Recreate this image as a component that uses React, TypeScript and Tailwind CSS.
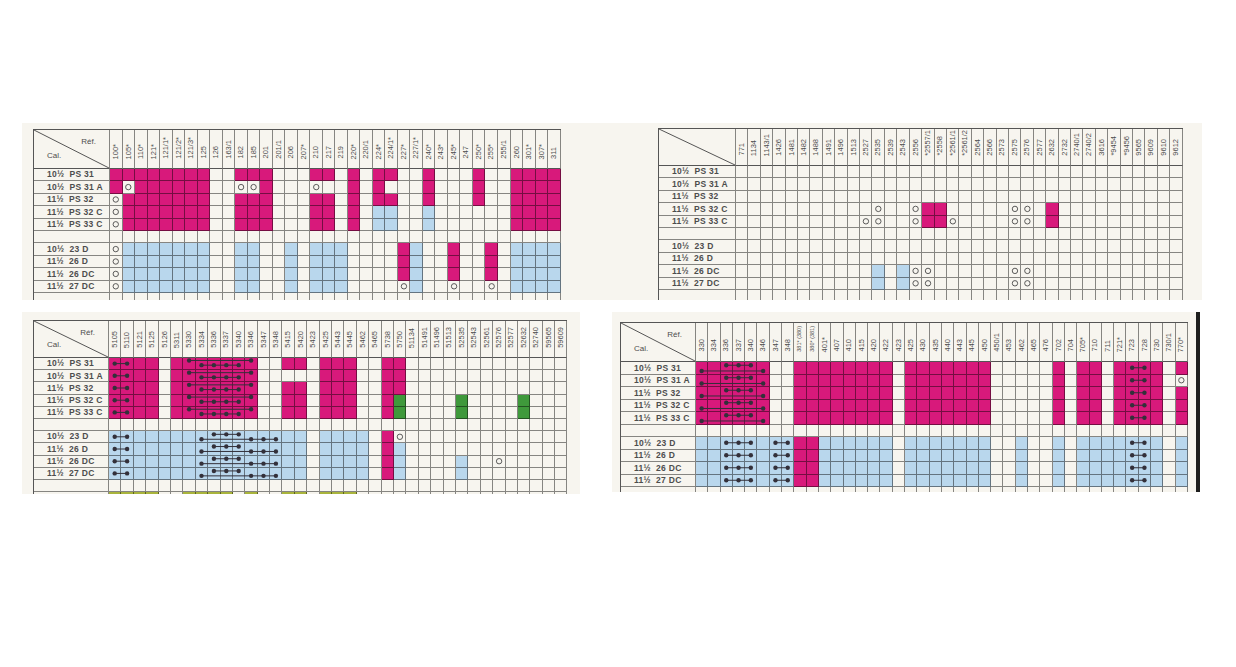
import React from 'react';

type Fill = [number, number, number, number, 'M' | 'B' | 'G' | 'O'];
type Chain = { rows: number[]; cols: number[]; y: number };

type Chart = {
  cols: string[];
  grid: string;
  labelW: number;
  headH: number;
  colW: number;
  rowH: number;
  corner: boolean;
  fills: Fill[];
  circles: [number, number][];
  chains: Chain[];
};

const FILL_CLS = {
  M: 'bg-[#d8197b]',
  B: 'bg-[#b9d7ed]',
  G: 'bg-[#3f993b]',
  O: 'bg-[#a9b43c]',
};

const LABELS: [string, string][] = [
  ['10½', 'PS 31'],
  ['10½', 'PS 31 A'],
  ['11½', 'PS 32'],
  ['11½', 'PS 32 C'],
  ['11½', 'PS 33 C'],
  ['', ''],
  ['10½', '23 D'],
  ['11½', '26 D'],
  ['11½', '26 DC'],
  ['11½', '27 DC'],
  ['', ''],
  ['', ''],
];

const MAG = [0, 1, 2, 3, 4];
const BLU = [6, 7, 8, 9];

const chart1: Chart = {
  cols: ['100*', '105*', '110*', '121*', '121/1*', '121/2*', '121/3*', '125', '126', '163/1', '182', '185', '201', '201/1', '206', '207*', '210', '217', '219', '220*', '220/1', '224*', '224/1*', '227*', '227/1*', '240*', '243*', '245*', '247', '250*', '255*', '255/1', '260', '301*', '307*', '311'],
  grid: 'grid-cols-[76px_repeat(36,12.53px)] grid-rows-[39px_repeat(12,12.4px)]',
  labelW: 76,
  headH: 39,
  colW: 12.53,
  rowH: 12.4,
  corner: true,
  fills: [
    [0, 0, 0, 7, 'M'], [0, 0, 10, 12, 'M'], [0, 0, 16, 17, 'M'], [0, 0, 19, 19, 'M'], [0, 0, 21, 22, 'M'], [0, 0, 25, 25, 'M'], [0, 0, 29, 29, 'M'], [0, 0, 32, 35, 'M'],
    [1, 1, 0, 0, 'M'], [1, 1, 2, 7, 'M'], [1, 1, 12, 12, 'M'], [1, 1, 19, 19, 'M'], [1, 1, 21, 21, 'M'], [1, 1, 25, 25, 'M'], [1, 1, 29, 29, 'M'], [1, 1, 32, 35, 'M'],
    [2, 2, 1, 7, 'M'], [2, 2, 10, 12, 'M'], [2, 2, 16, 17, 'M'], [2, 2, 19, 19, 'M'], [2, 2, 21, 22, 'M'], [2, 2, 25, 25, 'M'], [2, 2, 29, 29, 'M'], [2, 2, 32, 35, 'M'],
    [3, 4, 1, 7, 'M'], [3, 4, 10, 12, 'M'], [3, 4, 16, 17, 'M'], [3, 4, 19, 19, 'M'], [3, 4, 21, 22, 'B'], [3, 4, 25, 25, 'B'], [3, 4, 32, 35, 'M'],
    [6, 9, 1, 7, 'B'], [6, 9, 10, 11, 'B'], [6, 9, 14, 14, 'B'], [6, 9, 16, 18, 'B'], [6, 8, 23, 23, 'M'], [6, 9, 24, 24, 'B'], [6, 8, 27, 27, 'M'], [6, 8, 30, 30, 'M'], [6, 9, 32, 35, 'B'],
  ],
  circles: [[1, 1], [1, 10], [1, 11], [1, 16], [2, 0], [3, 0], [4, 0], [6, 0], [7, 0], [8, 0], [9, 0], [9, 23], [9, 27], [9, 30]],
  chains: [],
};

const chart2: Chart = {
  cols: ['771', '1134', '1143/1', '1426', '1481', '1482', '1488', '1491', '1496', '1513', '2527', '2535', '2539', '2543', '2556', '*2557/1', '*2558', '*2561/1', '*2561/2', '2564', '2566', '2573', '2575', '2576', '2577', '2632', '2732', '2740/1', '2740/2', '3616', '*9454', '*9456', '9565', '9609', '9610', '9612'],
  grid: 'grid-cols-[77px_repeat(36,12.42px)] grid-rows-[37px_repeat(12,12.4px)]',
  labelW: 77,
  headH: 37,
  colW: 12.42,
  rowH: 12.4,
  corner: false,
  fills: [[3, 4, 15, 16, 'M'], [3, 4, 25, 25, 'M'], [8, 9, 11, 11, 'B'], [8, 9, 13, 13, 'B']],
  circles: [[3, 11], [3, 14], [3, 22], [3, 23], [4, 10], [4, 11], [4, 14], [4, 17], [4, 22], [4, 23], [8, 14], [8, 15], [9, 14], [9, 15], [8, 22], [8, 23], [9, 22], [9, 23]],
  chains: [],
};

const chart3: Chart = {
  cols: ['5105', '5110', '5121', '5125', '5126', '5311', '5330', '5334', '5336', '5337', '5340', '5346', '5347', '5348', '5415', '5420', '5423', '5425', '5443', '5445', '5462', '5465', '5738', '5750', '51134', '51491', '51496', '51513', '52535', '52543', '52561', '52576', '52577', '52632', '52740', '59565', '59609'],
  grid: 'grid-cols-[75px_repeat(37,12.4px)] grid-rows-[37px_repeat(12,12.2px)]',
  labelW: 75,
  headH: 37,
  colW: 12.4,
  rowH: 12.2,
  corner: true,
  fills: [
    [0, 4, 0, 3, 'M'], [0, 4, 5, 11, 'M'], [0, 0, 14, 15, 'M'], [2, 4, 14, 15, 'M'], [0, 4, 17, 19, 'M'], [0, 4, 22, 22, 'M'], [0, 2, 23, 23, 'M'],
    [3, 4, 23, 23, 'G'], [3, 4, 28, 28, 'G'], [3, 4, 33, 33, 'G'],
    [6, 9, 0, 15, 'B'], [6, 9, 17, 20, 'B'], [6, 9, 22, 22, 'M'], [7, 9, 23, 23, 'B'], [8, 9, 28, 28, 'B'],
    [11, 11, 0, 3, 'O'], [11, 11, 6, 9, 'O'], [11, 11, 11, 11, 'O'], [11, 11, 14, 15, 'O'], [11, 11, 17, 19, 'O'],
  ],
  circles: [[6, 23], [8, 31]],
  chains: [
    { rows: MAG, cols: [0, 1], y: 0.5 },
    { rows: MAG, cols: [6, 11], y: 0.22 },
    { rows: MAG, cols: [7, 8, 9, 10], y: 0.64 },
    { rows: BLU, cols: [0, 1], y: 0.5 },
    { rows: BLU, cols: [8, 9, 10], y: 0.28 },
    { rows: BLU, cols: [7, 11, 12, 13], y: 0.72 },
  ],
};

const chart4: Chart = {
  cols: ['330', '334', '336', '337', '340', '346', '347', '348', '381* (380)', '380* (381)', '401*', '407', '410', '415', '420', '422', '423', '425', '430', '435', '440', '443', '445', '450', '450/1', '453', '462', '465', '476', '702', '704', '705*', '710', '711', '721*', '723', '728', '730', '730/1', '770*'],
  grid: 'grid-cols-[75px_repeat(40,12.3px)] grid-rows-[39px_repeat(12,12.5px)]',
  labelW: 75,
  headH: 39,
  colW: 12.3,
  rowH: 12.5,
  corner: true,
  fills: [
    [0, 4, 0, 5, 'M'], [0, 4, 8, 15, 'M'], [0, 4, 17, 23, 'M'], [0, 4, 29, 29, 'M'], [0, 4, 31, 32, 'M'], [0, 4, 34, 37, 'M'], [0, 0, 39, 39, 'M'], [2, 4, 39, 39, 'M'],
    [6, 9, 0, 7, 'B'], [6, 9, 8, 9, 'M'], [6, 9, 10, 15, 'B'], [6, 9, 17, 23, 'B'], [6, 9, 26, 26, 'B'], [6, 9, 29, 29, 'B'], [6, 9, 31, 37, 'B'], [6, 9, 39, 39, 'B'],
  ],
  circles: [[1, 39]],
  chains: [
    { rows: MAG, cols: [2, 3, 4], y: 0.28 },
    { rows: MAG, cols: [0, 5], y: 0.78 },
    { rows: MAG, cols: [35, 36], y: 0.5 },
    { rows: BLU, cols: [2, 3, 4], y: 0.5 },
    { rows: BLU, cols: [6, 7], y: 0.5 },
    { rows: BLU, cols: [35, 36], y: 0.5 },
  ],
};

const fillAt = (c: Chart, r: number, col: number) => {
  const f = c.fills.find(([r0, r1, c0, c1]) => r >= r0 && r <= r1 && col >= c0 && col <= c1);
  return f ? FILL_CLS[f[4]] : '';
};

const CELL = 'border-r border-b border-[#00000075]';

const ChartTable: React.FC<{ c: Chart }> = ({ c }) => {
  const rows = LABELS.map((_, i) => i);
  const cx = (col: number) => col * c.colW + (c.colW - 1) / 2;
  const cy = (r: number, f: number) => r * c.rowH + f * (c.rowH - 1);

  return (
    <div className="relative w-max font-['Liberation_Sans',Arial,sans-serif] text-[#4d4d4d]">
      <div className={`grid w-max border-l border-t border-[#555] ${c.grid}`}>
        {/* corner cell with diagonal */}
        <div className={`relative flex flex-col justify-between px-[13px] pt-[8px] pb-[8px] ${CELL} border-b-[#555]`}>
          <svg className="absolute inset-0 w-full h-full" preserveAspectRatio="none" viewBox="0 0 100 100">
            <line x1="0" y1="0" x2="100" y2="100" stroke="#555" strokeWidth="1" vectorEffect="non-scaling-stroke" />
          </svg>
          {c.corner && (
            <>
              <span className="self-end text-[8px] leading-none">Réf.</span>
              <span className="self-start text-[8px] leading-none">Cal.</span>
            </>
          )}
        </div>
        {c.cols.map((h, i) => (
          <div key={h + i} className={`flex items-end justify-center pb-[9px] overflow-hidden ${CELL} border-b-[#555]`}>
            <span
              className={`[writing-mode:vertical-rl] rotate-180 leading-none whitespace-nowrap ${
                h.length > 7 ? 'text-[5.5px]' : 'text-[7.5px]'
              }`}
            >
              {h}
            </span>
          </div>
        ))}
        {rows.map((r) => (
          <React.Fragment key={r}>
            <div className={`flex items-center gap-[5px] pl-[13px] text-[8.5px] font-bold tracking-[0.3px] leading-none whitespace-nowrap ${CELL}`}>
              <span>{LABELS[r][0]}</span>
              <span>{LABELS[r][1]}</span>
            </div>
            {c.cols.map((_, i) => (
              <div key={i} className={`${CELL} ${fillAt(c, r, i)}`} />
            ))}
          </React.Fragment>
        ))}
      </div>

      {/* marks drawn over the grid */}
      <svg
        className="absolute pointer-events-none"
        style={{ left: c.labelW + 1, top: c.headH + 1 }}
        width={c.cols.length * c.colW}
        height={rows.length * c.rowH}
      >
        {c.circles.map(([r, col]) => (
          <circle key={`${r}-${col}`} cx={cx(col)} cy={cy(r, 0.5)} r="2.7" fill="none" stroke="#4a4a4a" strokeWidth="0.9" />
        ))}
        {c.chains.map((ch, k) =>
          ch.rows.map((r) => (
            <g key={`${k}-${r}`}>
              <line
                x1={cx(ch.cols[0])}
                x2={cx(ch.cols[ch.cols.length - 1])}
                y1={cy(r, ch.y)}
                y2={cy(r, ch.y)}
                stroke="#33303a"
                strokeWidth="1"
              />
              {ch.cols.map((col) => (
                <circle key={col} cx={cx(col)} cy={cy(r, ch.y)} r="2.2" fill="#33303a" />
              ))}
            </g>
          )),
        )}
      </svg>
    </div>
  );
};

export default function App() {
  return (
    <div className="w-[1236px] h-[667px] bg-white pt-[123px] pl-[22px] overflow-hidden">
      {/* top row of scans */}
      <div className="flex">
        <div className="w-[578px] h-[177px] bg-[#f7f5ef] overflow-hidden pl-[11px] pt-[6px]">
          <ChartTable c={chart1} />
        </div>
        <div className="w-[602px] h-[177px] bg-[#f7f5ef] overflow-hidden pl-[58px] pt-[5px]">
          <ChartTable c={chart2} />
        </div>
      </div>

      {/* bottom row of scans */}
      <div className="flex items-start mt-[12px]">
        <div className="w-[558px] h-[182px] bg-[#f7f5ef] overflow-hidden pl-[11px] pt-[8px]">
          <ChartTable c={chart3} />
        </div>
        <div className="ml-[32px] w-[588px] h-[180px] bg-[#f7f5ef] overflow-hidden flex">
          <div className="flex-1 overflow-hidden pl-[8px] pt-[10px]">
            <ChartTable c={chart4} />
          </div>
          <div className="w-[4px] h-full bg-[#1e1e1e]" />
        </div>
      </div>
    </div>
  );
}
